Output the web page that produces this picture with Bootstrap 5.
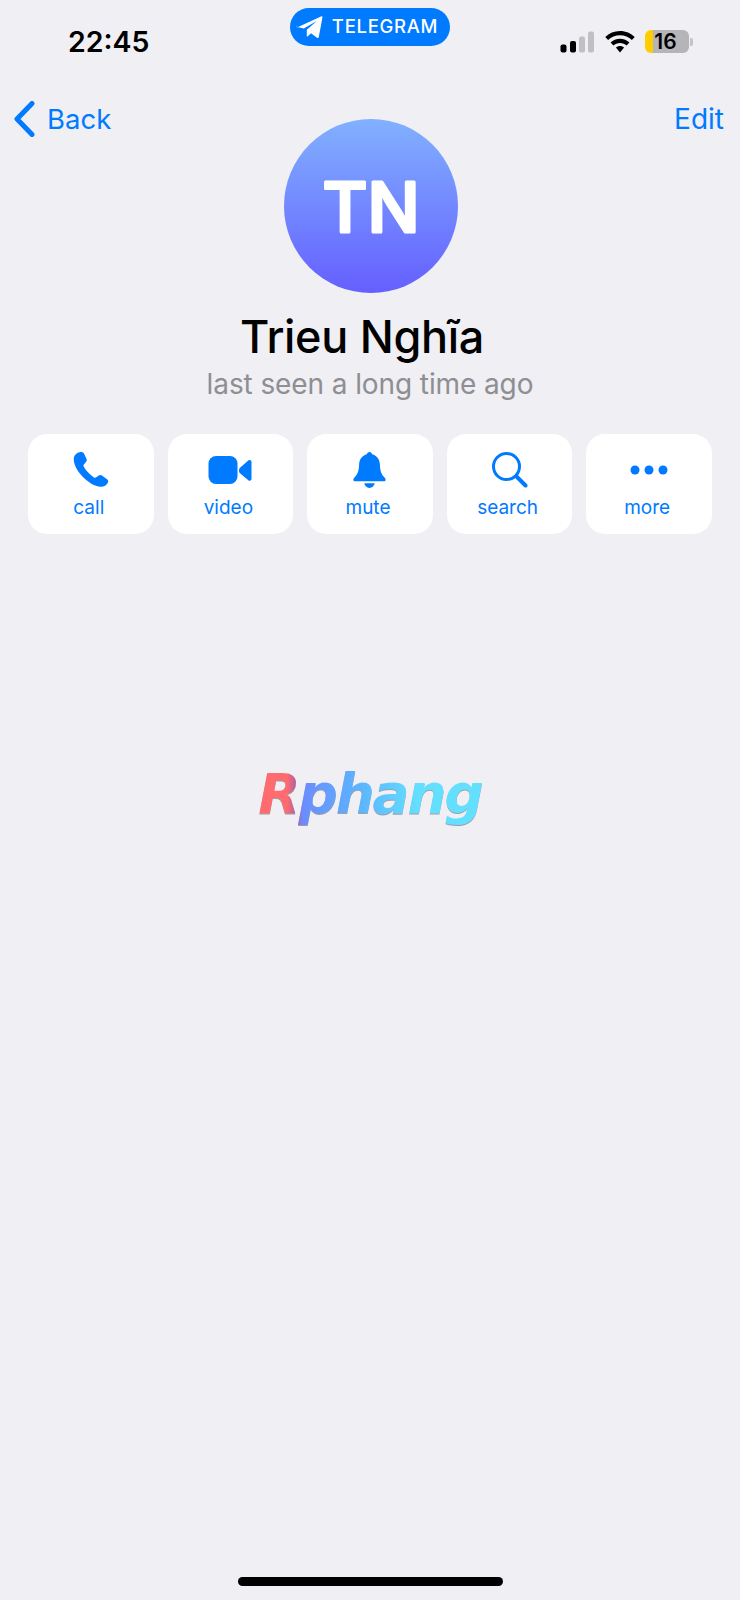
<!DOCTYPE html>
<html lang="en">
  <head>
    <meta charset="UTF-8" />
    <title>Trieu Nghĩa</title>
    <meta name="viewport" content="width=device-width, initial-scale=1" />
    <link href="https://cdn.jsdelivr.net/npm/bootstrap@5.3.3/dist/css/bootstrap.min.css" rel="stylesheet" />
    <style>
      body {
        background: #efeff4;
        font-family: Inter, "Liberation Sans", sans-serif;
        color: #000;
      }
      .screen {
        height: 1600px;
      }
      .status-row {
        height: 66px;
        padding: 8px 47px 0 68px;
      }
      .clock {
        width: 222px;
        padding-top: 18px;
        font-size: 28.5px;
        font-weight: 600;
        line-height: 32px;
      }
      .app-pill {
        width: 160px;
        height: 38px;
        background: #007aff;
        color: #fff;
        font-size: 18.5px;
        font-weight: 500;
        letter-spacing: 0.7px;
        border-radius: 19px;
        gap: 9px;
        padding-right: 6px;
      }
      .status-icons {
        padding-top: 22px;
        gap: 10.500px;
      }
      .batt {
        width: 44px;
        height: 23px;
        border-radius: 6px;
        background: linear-gradient(to right, #ffcc00 8px, #b5b5b9 8px);
        font-size: 21px;
        font-weight: 600;
        line-height: 23px;
        padding-left: 4px;
      }
      .batt-cap {
        width: 3px;
        height: 8px;
        margin-left: 1px;
        background: #c4c4c8;
        border-radius: 0 2px 2px 0;
      }
      .header-row {
        padding: 0 16px 0 14px;
        margin-top: 35px;
      }
      .nav-side {
        width: 100px;
        color: #007aff;
        font-size: 28px;
        line-height: 36px;
        gap: 12px;
      }
      .back-word {
        font-size: 27.500px;
      }
      .face {
        width: 174px;
        height: 174px;
        background: linear-gradient(to bottom, #81b1ff, #655fff);
        margin: 18px 0 0 3px;
      }
      .face text {
        font-family: Inter, "Liberation Sans", sans-serif;
        font-size: 69px;
        font-weight: 500;
        stroke: #fff;
        stroke-width: 3px;
        stroke-linejoin: round;
        fill: #fff;
      }
      .person-name {
        font-size: 45px;
        font-weight: 500;
        line-height: 56px;
        margin-top: 16px;
        padding-right: 16px;
        letter-spacing: -0.3px;
      }
      .seen-line {
        color: #8e8e93;
        font-size: 28px;
        letter-spacing: -0.1px;
        line-height: 36px;
        margin-top: 1px;
      }
      .action-row {
        padding: 0 28px;
        margin-top: 32px;
        gap: 14px;
      }
      .action-tile {
        width: 126px;
        height: 100px;
        background: #fff;
        color: #007aff;
        border: 0;
        border-radius: 19px;
        padding: 0;
        font-size: 19px;
        line-height: 24px;
      }
      .action-tile:hover {
        background: #fff;
        color: #007aff;
      }
      .tile-icon {
        height: 54px;
        padding-top: 18px;
      }
      .tile-word {
        margin-top: 8px;
        padding-right: 4px;
      }
      .watermark {
        margin-top: 225px;
        height: 70px;
      }
      .watermark span {
        font-family: "DejaVu Sans", sans-serif;
        font-size: 55px;
        font-weight: 700;
        font-style: italic;
        letter-spacing: -2.200px;
        line-height: 70px;
        background: linear-gradient(to right, #ff6b6f 0, #ff6b6f 13%, #b0609f 17%, #6b8cff 20%, #5cb4ff 45%, #63e0ff 72%, #63e0ff 100%);
        -webkit-background-clip: text;
        background-clip: text;
        color: transparent;
        filter: drop-shadow(0 1px 0 rgba(90, 90, 100, 0.55));
      }
      .home-bar {
        width: 265px;
        height: 9px;
        background: #000;
        border-radius: 5px;
        margin-bottom: 14px;
      }
    </style>
  </head>
  <body>
    <div class="screen d-flex flex-column">
      <div class="status-row d-flex align-items-start">
        <div class="clock">22:45</div>
        <div class="app-pill d-flex align-items-center justify-content-center">
          <svg width="27" height="24" viewBox="0 0 27 24"><path fill="#fff" d="M1 12.500 25 1.500c.9-.4 1.600.2 1.400 1.200L22.800 22c-.2 1-1 1.300-1.800.7l-6-4.500-3.200 3c-.5.5-1 .3-1-.4v-6l10-8.800-13 7.600-6.500-1.700c-1-.3-1.100-.9-.3-1.400z"/></svg>
          <span>TELEGRAM</span>
        </div>
        <div class="status-icons d-flex align-items-center ms-auto">
          <svg width="34" height="22" viewBox="0 0 34 22">
            <rect x="0.500" y="13.500" width="6" height="8" rx="2" fill="#000"/>
            <rect x="10" y="10" width="6" height="11.500" rx="2" fill="#000"/>
            <rect x="19" y="5.500" width="6" height="16" rx="2" fill="#bfbfc4"/>
            <rect x="28" y="0.500" width="6" height="21" rx="2" fill="#bfbfc4"/>
          </svg>
          <svg width="30" height="22" viewBox="0 0 30 22">
            <path fill="#000" d="M15 0c5.800 0 10.900 2.300 14.700 6l-2.800 3C23.800 6 19.600 4.200 15 4.200S6.200 6 3.100 9L.3 6C4.100 2.300 9.200 0 15 0z"/>
            <path fill="#000" d="M15 7.700c3.700 0 6.900 1.400 9.400 3.800l-2.800 3c-1.700-1.600-4-2.600-6.600-2.600s-4.900 1-6.600 2.600l-2.800-3c2.500-2.400 5.700-3.800 9.400-3.800z"/>
            <path fill="#000" d="M15 15c1.600 0 3 .6 4.100 1.600L15 21.500l-4.100-4.900C12 15.600 13.400 15 15 15z"/>
          </svg>
          <div class="d-flex align-items-center">
            <div class="batt">&nbsp;16</div>
            <div class="batt-cap"></div>
          </div>
        </div>
      </div>

      <div class="header-row d-flex justify-content-between align-items-start">
        <div class="nav-side d-flex align-items-center">
          <svg width="21" height="36" viewBox="0 0 21 36"><path fill="none" stroke="#007aff" stroke-width="5" stroke-linecap="round" stroke-linejoin="round" d="M18 2.500 3 18l15 15.500"/></svg>
          <span class="back-word">Back</span>
        </div>
        <div class="face rounded-circle">
          <svg width="174" height="174" viewBox="0 0 174 174"><text x="87" y="113" text-anchor="middle">TN</text></svg>
        </div>
        <div class="nav-side text-end">Edit</div>
      </div>

      <div class="text-center">
        <div class="person-name">Trieu Nghĩa</div>
        <div class="seen-line">last seen a long time ago</div>
      </div>

      <div class="action-row d-flex">
        <button class="btn action-tile d-flex flex-column align-items-center" type="button">
          <div class="tile-icon">
            <svg width="36" height="36" viewBox="0 0 36 36"><path fill="#007aff" d="M5.500.600C3.800 1.300 1 3.400.8 6.500c-.3 5 2.600 11.400 8.200 17.500 5.900 6.300 13 10.500 18.500 10.800 3.300.2 5.900-1.500 7.300-4 .7-1.200.5-2.300-.5-3.200l-5-3.900c-1.200-.9-2.500-.9-3.600-.1l-2.400 1.700c-.8.600-1.600.6-2.400.1-2.100-1.300-4.100-3-6-5.100-1.800-2-3.200-4-4.200-5.900-.4-.8-.3-1.500.3-2.200l2-2.200c.9-1 1-2.300.3-3.500L11 1.600C10.200.2 8.900-.2 7.500 0z"/></svg>
          </div>
          <div class="tile-word">call</div>
        </button>
        <button class="btn action-tile d-flex flex-column align-items-center" type="button">
          <div class="tile-icon">
            <svg width="44" height="36" viewBox="0 0 44 36"><rect x="0.500" y="4" width="29" height="28" rx="7.500" fill="#007aff"/><path fill="#007aff" d="M32 15.800 40.300 8.600c1.300-1.100 3.200-.3 3.200 1.400v16.800c0 1.700-1.900 2.500-3.200 1.400L32 21.200c-.7-.6-1-1.400-1-2.300v-.8c0-.9.300-1.700 1-2.300z"/></svg>
          </div>
          <div class="tile-word">video</div>
        </button>
        <button class="btn action-tile d-flex flex-column align-items-center" type="button">
          <div class="tile-icon">
            <svg width="33" height="36" viewBox="0 0 34 38"><path fill="#007aff" d="M17 0c1.500 0 2.600 1.100 2.800 2.500 5 1.300 8 5.400 8.200 11 .2 6.500 1.400 9.500 4.200 12.700.9 1 1.800 1.900 1.800 3 0 1.100-.8 1.800-2 1.800H2c-1.200 0-2-.7-2-1.800 0-1.100.9-2 1.800-3C4.600 23 5.800 20 6 13.500c.2-5.600 3.200-9.700 8.200-11C14.400 1.100 15.500 0 17 0z"/><path fill="#007aff" d="M11.500 33h11c-.4 2.800-2.700 5-5.500 5s-5.100-2.200-5.500-5z"/></svg>
          </div>
          <div class="tile-word">mute</div>
        </button>
        <button class="btn action-tile d-flex flex-column align-items-center" type="button">
          <div class="tile-icon">
            <svg width="36" height="36" viewBox="0 0 36 36"><circle cx="14.500" cy="14.500" r="13" fill="none" stroke="#007aff" stroke-width="3"/><path fill="none" stroke="#007aff" stroke-width="4" stroke-linecap="round" d="M24.500 24.500 33.500 33.500"/></svg>
          </div>
          <div class="tile-word">search</div>
        </button>
        <button class="btn action-tile d-flex flex-column align-items-center" type="button">
          <div class="tile-icon">
            <svg width="38" height="36" viewBox="0 0 38 36"><circle cx="5" cy="18" r="4.500" fill="#007aff"/><circle cx="19" cy="18" r="4.500" fill="#007aff"/><circle cx="33" cy="18" r="4.500" fill="#007aff"/></svg>
          </div>
          <div class="tile-word">more</div>
        </button>
      </div>

      <div class="watermark text-center"><span>Rphang</span></div>

      <div class="home-bar align-self-center mt-auto"></div>
    </div>
    <script src="https://cdn.jsdelivr.net/npm/bootstrap@5.3.3/dist/js/bootstrap.bundle.min.js"></script>
  </body>
</html>
